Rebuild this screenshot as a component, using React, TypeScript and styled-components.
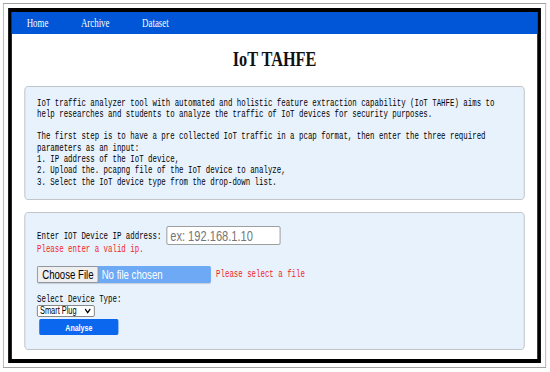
import React from "react";
import styled, { createGlobalStyle } from "styled-components";

const SX = 0.74;

const Global = createGlobalStyle`
  html, body { margin: 0; padding: 0; background: #ffffff; overflow: hidden; }
  body { width: 550px; height: 372px; }
`;

const Stage = styled.div`
  width: ${550 / SX}px;
  height: 372px;
  transform: scaleX(${SX});
  transform-origin: 0 0;
  padding-top: 3px;
  padding-left: 4px;
  box-sizing: border-box;
`;

const Frame = styled.div`
  box-sizing: border-box;
  width: 734px;
  height: 365px;
  border: 1px solid #a3a3a3;
  padding: 4px 6px;
  display: flex;
`;

const Page = styled.div`
  flex: 1;
  border-style: solid;
  border-color: #000;
  border-width: 4px 5px;
  background: #fff;
  display: flex;
  flex-direction: column;
`;

const Nav = styled.nav`
  height: 22px;
  background: #0056d6;
  display: flex;
  align-items: center;
  gap: 44px;
  padding-left: 20px;
`;

const NavLink = styled.a`
  font-family: "Liberation Serif", "Times New Roman", serif;
  font-size: 12px;
  color: #ffffff;
  text-decoration: none;
  line-height: 22px;
`;

const Title = styled.h1`
  margin: 10px 0 0;
  height: 30px;
  line-height: 30px;
  text-align: center;
  font-family: "Liberation Serif", "Times New Roman", serif;
  font-weight: bold;
  font-size: 22px;
  color: #111;
`;

const Panel = styled.section<{ $top: number }>`
  margin: ${(p) => p.$top}px 17px 0;
  background: #e8f2fd;
  border: 1px solid #b9bdc1;
  border-radius: 5px;
`;

const Info = styled.div`
  padding: 10.5px 16px 11.5px;
  font-family: "Liberation Mono", "Courier New", monospace;
  font-size: 10px;
  line-height: 11.3px;
  white-space: pre;
  color: #000;
`;

const Form = styled.form`
  padding: 13px 16px 14px;
  display: flex;
  flex-direction: column;
  align-items: flex-start;
  font-family: "Liberation Mono", "Courier New", monospace;
  font-size: 10px;
  color: #000;
`;

const Row = styled.div<{ $top?: number }>`
  display: flex;
  align-items: center;
  gap: 7px;
  margin-top: ${(p) => p.$top ?? 0}px;
`;

const Label = styled.label<{ $top?: number; $nudge?: number }>`
  display: block;
  line-height: 10px;
  padding-top: ${(p) => p.$nudge ?? 1}px;
  margin-top: ${(p) => p.$top ?? 0}px;
`;

const TextInput = styled.input`
  box-sizing: border-box;
  width: 154px;
  height: 19px;
  border: 1px solid #8f8f8f;
  border-radius: 2px;
  padding: 0 4px;
  font-family: "Liberation Sans", Arial, sans-serif;
  font-size: 15px;
  background: #fff;
  &::placeholder { color: #757575; }
`;

const Error = styled.div`
  color: #f02525;
  line-height: 9px;
`;

const FileInput = styled.input`
  box-sizing: border-box;
  width: 235px;
  height: 17px;
  background: #6ea9f6;
  color: #ffffff;
  border-radius: 2px;
  font-family: "Liberation Sans", Arial, sans-serif;
  font-size: 13px;
  line-height: 17px;
  padding: 0;
  box-shadow: 0 1px 1px rgba(0,0,0,0.15);
  &::file-selector-button {
    height: 17px;
    margin: 0 4px 0 0;
    padding: 0 6px;
    background: #efefef;
    border: 1px solid #8f8f8f;
    border-radius: 2px;
    color: #000;
    font-family: "Liberation Sans", Arial, sans-serif;
    font-size: 13px;
  }
`;

const SelectWrap = styled.div`
  position: relative;
  width: 78px;
  height: 12px;
`;

const Select = styled.select`
  appearance: none;
  -webkit-appearance: none;
  box-sizing: border-box;
  display: block;
  width: 78px;
  height: 12px;
  margin: 0;
  padding: 0 14px 0 3px;
  font-family: "Liberation Sans", Arial, sans-serif;
  font-size: 10px;
  line-height: 10px;
  border: 1px solid #767676;
  border-radius: 2px;
  background: #fff;
  color: #000;
`;

const Chevron = styled.svg`
  position: absolute;
  right: 5px;
  top: 3px;
  width: 9px;
  height: 6px;
  pointer-events: none;
`;

const Button = styled.button`
  margin: 2px 0 0 3px;
  width: 107px;
  height: 16px;
  border: none;
  border-radius: 2px;
  background: #0c67ef;
  color: #fff;
  font-family: "Liberation Sans", Arial, sans-serif;
  font-weight: bold;
  font-size: 9.5px;
  padding: 0;
`;

const infoText = `IoT traffic analyzer tool with automated and holistic feature extraction capability (IoT TAHFE) aims to
help researches and students to analyze the traffic of IoT devices for security purposes.

The first step is to have a pre collected IoT traffic in a pcap format, then enter the three required
parameters as an input:
1. IP address of the IoT device,
2. Upload the. pcapng file of the IoT device to analyze,
3. Select the IoT device type from the drop-down list.`;

export default function App() {
  return (
    <>
      <Global />
      <Stage>
        <Frame>
          <Page>
            <Nav>
              <NavLink href="#">Home</NavLink>
              <NavLink href="#">Archive</NavLink>
              <NavLink href="#">Dataset</NavLink>
            </Nav>
            <Title>IoT TAHFE</Title>
            <Panel $top={12}>
              <Info>{infoText}</Info>
            </Panel>
            <Panel $top={12}>
              <Form onSubmit={(e) => e.preventDefault()}>
                <Row>
                  <Label htmlFor="ip" $nudge={3}>Enter IOT Device IP address:</Label>
                  <TextInput id="ip" type="text" placeholder="ex: 192.168.1.10" />
                </Row>
                <Error>Please enter a valid ip.</Error>
                <Row $top={12}>
                  <FileInput type="file" />
                  <Error>Please select a file</Error>
                </Row>
                <Label $top={11} htmlFor="dev">Select Device Type:</Label>
                <SelectWrap>
                  <Select id="dev" defaultValue="Smart Plug">
                    <option>Smart Plug</option>
                    <option>Camera</option>
                    <option>Hub</option>
                  </Select>
                  <Chevron viewBox="0 0 9 6">
                    <path d="M1 1 L4.5 4.5 L8 1" fill="none" stroke="#000" strokeWidth="1.6" />
                  </Chevron>
                </SelectWrap>
                <Button type="submit">Analyse</Button>
              </Form>
            </Panel>
          </Page>
        </Frame>
      </Stage>
    </>
  );
}
